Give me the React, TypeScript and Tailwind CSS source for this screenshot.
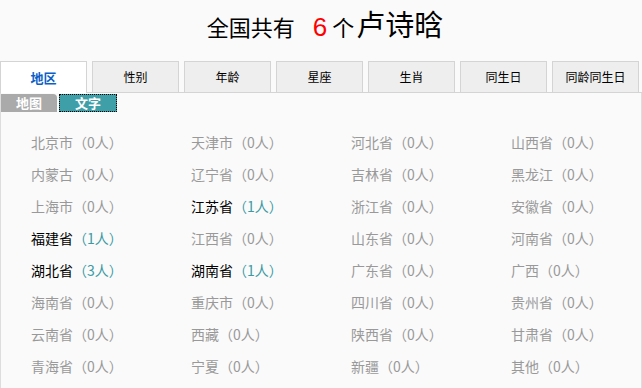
const tabs = ['地区', '性别', '年龄', '星座', '生肖', '同生日', '同龄同生日'];

type Region = { name: string; count: number };

const regions: Region[] = [
  { name: '北京市', count: 0 },
  { name: '天津市', count: 0 },
  { name: '河北省', count: 0 },
  { name: '山西省', count: 0 },
  { name: '内蒙古', count: 0 },
  { name: '辽宁省', count: 0 },
  { name: '吉林省', count: 0 },
  { name: '黑龙江', count: 0 },
  { name: '上海市', count: 0 },
  { name: '江苏省', count: 1 },
  { name: '浙江省', count: 0 },
  { name: '安徽省', count: 0 },
  { name: '福建省', count: 1 },
  { name: '江西省', count: 0 },
  { name: '山东省', count: 0 },
  { name: '河南省', count: 0 },
  { name: '湖北省', count: 3 },
  { name: '湖南省', count: 1 },
  { name: '广东省', count: 0 },
  { name: '广西', count: 0 },
  { name: '海南省', count: 0 },
  { name: '重庆市', count: 0 },
  { name: '四川省', count: 0 },
  { name: '贵州省', count: 0 },
  { name: '云南省', count: 0 },
  { name: '西藏', count: 0 },
  { name: '陕西省', count: 0 },
  { name: '甘肃省', count: 0 },
  { name: '青海省', count: 0 },
  { name: '宁夏', count: 0 },
  { name: '新疆', count: 0 },
  { name: '其他', count: 0 },
];

const App = () => {
  return (
    <div className="min-h-screen bg-[#fafafa] font-['Noto_Sans_CJK_SC','Noto_Sans',sans-serif] overflow-hidden">
      {/* Title */}
      <h1 className="h-[61px] pt-[9px] pl-[8px] text-center text-[22px] leading-[30px] text-black whitespace-nowrap">
        全国共有
        <span className="ml-[18px] mr-[5px] text-[26px] leading-none text-[#ff0000] font-['Liberation_Sans',sans-serif]">6</span>
        个
        <span className="ml-[2px] text-[29px] leading-none">卢诗晗</span>
      </h1>

      {/* Tabs */}
      <div className="flex gap-[5px] h-[32px] border-b border-[#d4d4d4]">
        {tabs.map((t, i) =>
          i === 0 ? (
            <div
              key={t}
              className="w-[87px] h-[32px] shrink-0 bg-white border border-b-0 border-[#d4d4d4] text-[13px] font-bold text-[#0b5fc6] flex items-center justify-center"
            >
              {t}
            </div>
          ) : (
            <div
              key={t}
              className="w-[87px] h-[31px] shrink-0 bg-[#eeeeee] border border-b-0 border-[#d4d4d4] text-[12px] text-black flex items-center justify-center"
            >
              {t}
            </div>
          )
        )}
      </div>

      {/* Content */}
      <div className="border-l border-r border-[#dddddd] min-h-[296px] pt-px">
        <div className="flex gap-[2px] h-[18px]">
          <div className="w-[56px] bg-[#aaaaaa] rounded-tr-[4px] text-white text-[13px] font-bold leading-[18px] text-center">
            地图
          </div>
          <div className="w-[58px] bg-[#3f9fa8] outline-1 outline-dotted outline-black -outline-offset-1 text-white text-[13px] font-bold leading-[18px] text-center">
            文字
          </div>
        </div>

        <div className="grid grid-cols-[160px_160px_160px_160px] pl-[30px] pt-[14px] text-[14px] leading-[32px]">
          {regions.map((r) => (
            <div key={r.name} className="whitespace-nowrap">
              <span className={r.count > 0 ? 'text-black' : 'text-[#999999]'}>{r.name}</span>
              <span className={r.count > 0 ? 'text-[#3a9aa4]' : 'text-[#999999]'}>（{r.count}人）</span>
            </div>
          ))}
        </div>
      </div>
    </div>
  );
};

export default App;
